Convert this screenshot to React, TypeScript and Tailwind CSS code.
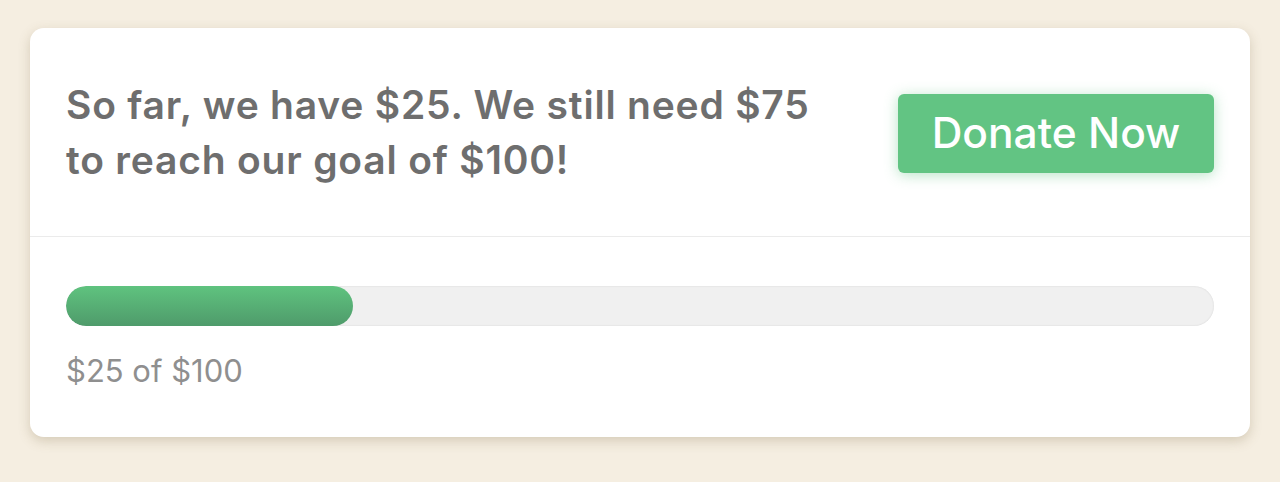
import React from "react";

const raised = 25;
const goal = 100;

export default function App() {
  const pct = Math.round((raised / goal) * 100);
  const headline = `So far, we have $${raised}. We still need $${goal - raised} to reach our goal of $${goal}!`;

  return (
    <div className="min-h-[482px] bg-[#f5eee1] px-[30px] pt-[28px] font-['Inter',sans-serif]">
      <div className="rounded-[14px] bg-white shadow-[0_4px_12px_rgba(120,100,60,0.25)]">
        {/* Headline + CTA */}
        <div className="flex h-[209px] items-center justify-between border-b border-[#ebebeb] px-[36px]">
          <h2 className="max-w-[770px] text-[39px] font-semibold leading-[55px] tracking-[0.8px] text-[#6e6e6e]">
            {headline}
          </h2>
          <button className="mt-[2px] flex h-[79px] w-[316px] items-center justify-center rounded-[6px] bg-[#62c483] text-[42.5px] font-medium text-white shadow-[0_2px_14px_rgba(98,196,131,0.45)]">
            Donate Now
          </button>
        </div>

        {/* Progress */}
        <div className="px-[36px] pb-[45px] pt-[49px]">
          <div className="h-[40px] w-full overflow-hidden rounded-full bg-[#f0f0f0] shadow-[inset_0_0_2px_rgba(0,0,0,0.12)]">
            <div
              className="h-full rounded-full bg-gradient-to-b from-[#5fc37f] to-[#4f9b6b]"
              style={{ width: `${pct}%` }}
            />
          </div>
          <p className="mt-[24px] text-[31px] leading-[42px] text-[#8f8f8f]">
            {`$${raised} of $${goal}`}
          </p>
        </div>
      </div>
    </div>
  );
}
